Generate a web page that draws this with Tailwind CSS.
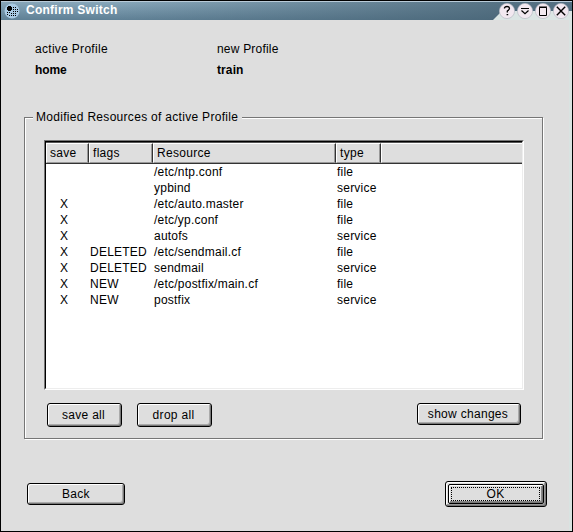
<!DOCTYPE html>
<html lang="en">
<head>
<meta charset="utf-8">
<title>Confirm Switch</title>
<script src="https://cdn.jsdelivr.net/npm/@tailwindcss/browser@4"></script>
</head>
<body class="w-[573px] h-[532px] overflow-hidden bg-black font-['Liberation_Sans',Arial,sans-serif] text-[12px] leading-4 text-black whitespace-nowrap tracking-[0.3px]">
<div class="w-[573px] h-[532px] p-px flex flex-col">
  <!-- title bar -->
  <header class="h-[19px] shrink-0 flex items-center relative border-t border-[#b9cbd8] bg-linear-to-b from-[#88a7ba] to-[#5f8095]">
    <div class="absolute inset-0 bg-linear-to-r from-transparent from-20% to-[#445f70]/75 to-90%"></div>
    <svg class="absolute right-0 top-0" width="80" height="18"><path d="M1 18L10 9H80V18Z" fill="#dbe5e4"/></svg>
    <svg class="relative ml-[3px]" width="16" height="16" viewBox="0 0 16 16" shape-rendering="crispEdges"><circle cx="8" cy="8" r="7.5" fill="#a9cae3" shape-rendering="auto"/><path d="M3 4h5v3H3zM4 3h3v5H4zM9 4h1v1H9zM11 4h1v1h-1zM9 6h1v1H9zM11 6h1v1h-1zM13 6h1v1h-1zM9 8h1v1H9zM11 8h1v1h-1zM13 8h1v1h-1zM3 9h1v1H3zM5 9h1v1H5zM7 10h1v1H7zM9 10h1v1H9zM11 10h1v1h-1zM3 11h1v1H3zM5 12h1v1H5zM7 12h1v1H7zM9 12h1v1H9zM11 12h1v1h-1z"/></svg>
    <h1 class="relative -top-px ml-[6px] text-[12px] leading-4 font-bold text-white tracking-[0.25px]">Confirm Switch</h1>
    <div class="relative ml-auto mr-[3px] flex gap-[2px]">
      <svg width="16" height="16" viewBox="0 0 16 16" fill="none" stroke="#000" stroke-width="1.3"><circle cx="8" cy="8" r="7.6" fill="#f2e8f0" stroke="#b9bcc6" stroke-width=".7"/><path d="M5.5 5.5V4.8Q6 3.5 8 3.5Q10.5 3.5 10.5 5.5Q10.5 6.5 8.3 8V9.5M7.6 11.6h1.6"/></svg>
      <svg width="16" height="16" viewBox="0 0 16 16" fill="none" stroke="#000" stroke-width="1.2"><circle cx="8" cy="8" r="7.6" fill="#f2e8f0" stroke="#b9bcc6" stroke-width=".7"/><path d="M4 5.5h8M4.5 7.5L8 10.8L11.5 7.5"/></svg>
      <svg width="16" height="16" viewBox="0 0 16 16" fill="none" stroke="#000"><circle cx="8" cy="8" r="7.6" fill="#f2e8f0" stroke="#b9bcc6" stroke-width=".7"/><path d="M4.5 4.5h7v8h-7zM4 4h8" /></svg>
      <svg width="16" height="16" viewBox="0 0 16 16" fill="none" stroke="#000" stroke-width="1.4"><circle cx="8" cy="8" r="7.6" fill="#f2e8f0" stroke="#b9bcc6" stroke-width=".7"/><path d="M3.8 3.8L12.2 12.2M12.2 3.8L3.8 12.2"/></svg>
    </div>
  </header>

  <main class="grow flex flex-col bg-[#dedede] border-r-[3px] border-[#d9e3e1] pl-[23px] pr-[25px]">
    <dl class="grid grid-cols-[182px_auto] grid-rows-[21px_21px] grid-flow-col pt-[21px] pl-[11px] h-[97px]">
      <dt>active Profile</dt>
      <dd class="font-bold tracking-[-0.1px]">home</dd>
      <dt class="tracking-[0.2px]">new Profile</dt>
      <dd class="font-bold tracking-[0.1px]">train</dd>
    </dl>

    <section class="w-[519px] h-[322px] shrink-0 flex flex-col border border-[#767676] shadow-[1px_1px_0_#fff,inset_1px_1px_0_#fff]">
      <h2 class="-mt-[9px] ml-[8px] w-[209px] h-4 pl-[3px] bg-[#dedede]">Modified Resources of active Profile</h2>
      <div class="mt-[15px] ml-[19px] w-[480px] h-[250px] shrink-0 border border-t-[#767676] border-l-[#767676] border-r-white border-b-white">
        <div class="h-full border border-t-black border-l-black border-r-[#ededed] border-b-[#ededed] bg-white">
          <div class="h-[22px] flex border-t border-b border-t-[#555] border-b-[#333] bg-[#dedede]">
            <div class="w-[43px] pl-[3px] border border-t-white border-l-white border-b-[#999] border-r-[#333] shadow-[inset_-1px_0_0_#999] leading-[18px]">save</div>
            <div class="w-[64px] pl-[3px] border border-t-white border-l-white border-b-[#999] border-r-[#333] shadow-[inset_-1px_0_0_#999] leading-[18px]">flags</div>
            <div class="w-[183px] pl-[3px] border border-t-white border-l-white border-b-[#999] border-r-[#333] shadow-[inset_-1px_0_0_#999] leading-[18px]">Resource</div>
            <div class="w-[45px] pl-[3px] border border-t-white border-l-white border-b-[#999] border-r-[#333] shadow-[inset_-1px_0_0_#999] leading-[18px]">type</div>
            <div class="grow border-t border-l border-b border-t-white border-l-white border-b-[#999]"></div>
          </div>
          <div id="rows"></div>
        </div>
      </div>
      <div class="mt-[13px] ml-[22px] mr-[21px] flex items-start">
        <button class="w-[75px] h-[24px] pr-[2px] border border-black rounded-[3px] shadow-[inset_1px_1px_0_#fff,inset_-1px_-1px_0_#777,inset_-2px_-2px_0_#aaa]">save all</button>
        <button class="ml-[15px] w-[75px] h-[24px] pr-[2px] border border-black rounded-[3px] shadow-[inset_1px_1px_0_#fff,inset_-1px_-1px_0_#777,inset_-2px_-2px_0_#aaa]">drop all</button>
        <button class="ml-auto w-[104px] h-[22px] pr-[2px] border border-black rounded-[3px] shadow-[inset_1px_1px_0_#fff,inset_-1px_-1px_0_#777,inset_-2px_-2px_0_#aaa]">show changes</button>
      </div>
    </section>

    <footer class="mt-[42px] ml-[3px] -mr-[3px] flex items-start justify-between">
      <button class="mt-[2px] w-[98px] h-[22px] border border-black rounded-[3px] shadow-[inset_1px_1px_0_#fff,inset_-1px_-1px_0_#777,inset_-2px_-2px_0_#aaa]">Back</button>
      <button class="w-[102px] h-[26px] p-[2px] border border-black rounded-[3px] shadow-[inset_1px_1px_0_#fff,inset_-1px_-1px_0_#777,inset_-2px_-2px_0_#999]"><span class="flex h-full p-[2px] pr-[3px] pb-[2px] border border-black rounded-[2px] shadow-[inset_1px_1px_0_#fff,inset_-1px_-1px_0_#777,inset_-2px_-2px_0_#888]"><span class="grow flex items-center justify-center border border-dotted border-black">OK</span></span></button>
    </footer>
  </main>
</div>
<script>
const rows = [
  ['', '', '/etc/ntp.conf', 'file'],
  ['', '', 'ypbind', 'service'],
  ['X', '', '/etc/auto.master', 'file'],
  ['X', '', '/etc/yp.conf', 'file'],
  ['X', '', 'autofs', 'service'],
  ['X', 'DELETED', '/etc/sendmail.cf', 'file'],
  ['X', 'DELETED', 'sendmail', 'service'],
  ['X', 'NEW', '/etc/postfix/main.cf', 'file'],
  ['X', 'NEW', 'postfix', 'service']
];
document.getElementById('rows').innerHTML = rows.map(r =>
  `<div class="grid grid-cols-[30px_64px_183px_auto] pl-[14px] h-4 tracking-[0.23px]">${r.map(c => `<span>${c}</span>`).join('')}</div>`
).join('');
</script>
</body>
</html>
